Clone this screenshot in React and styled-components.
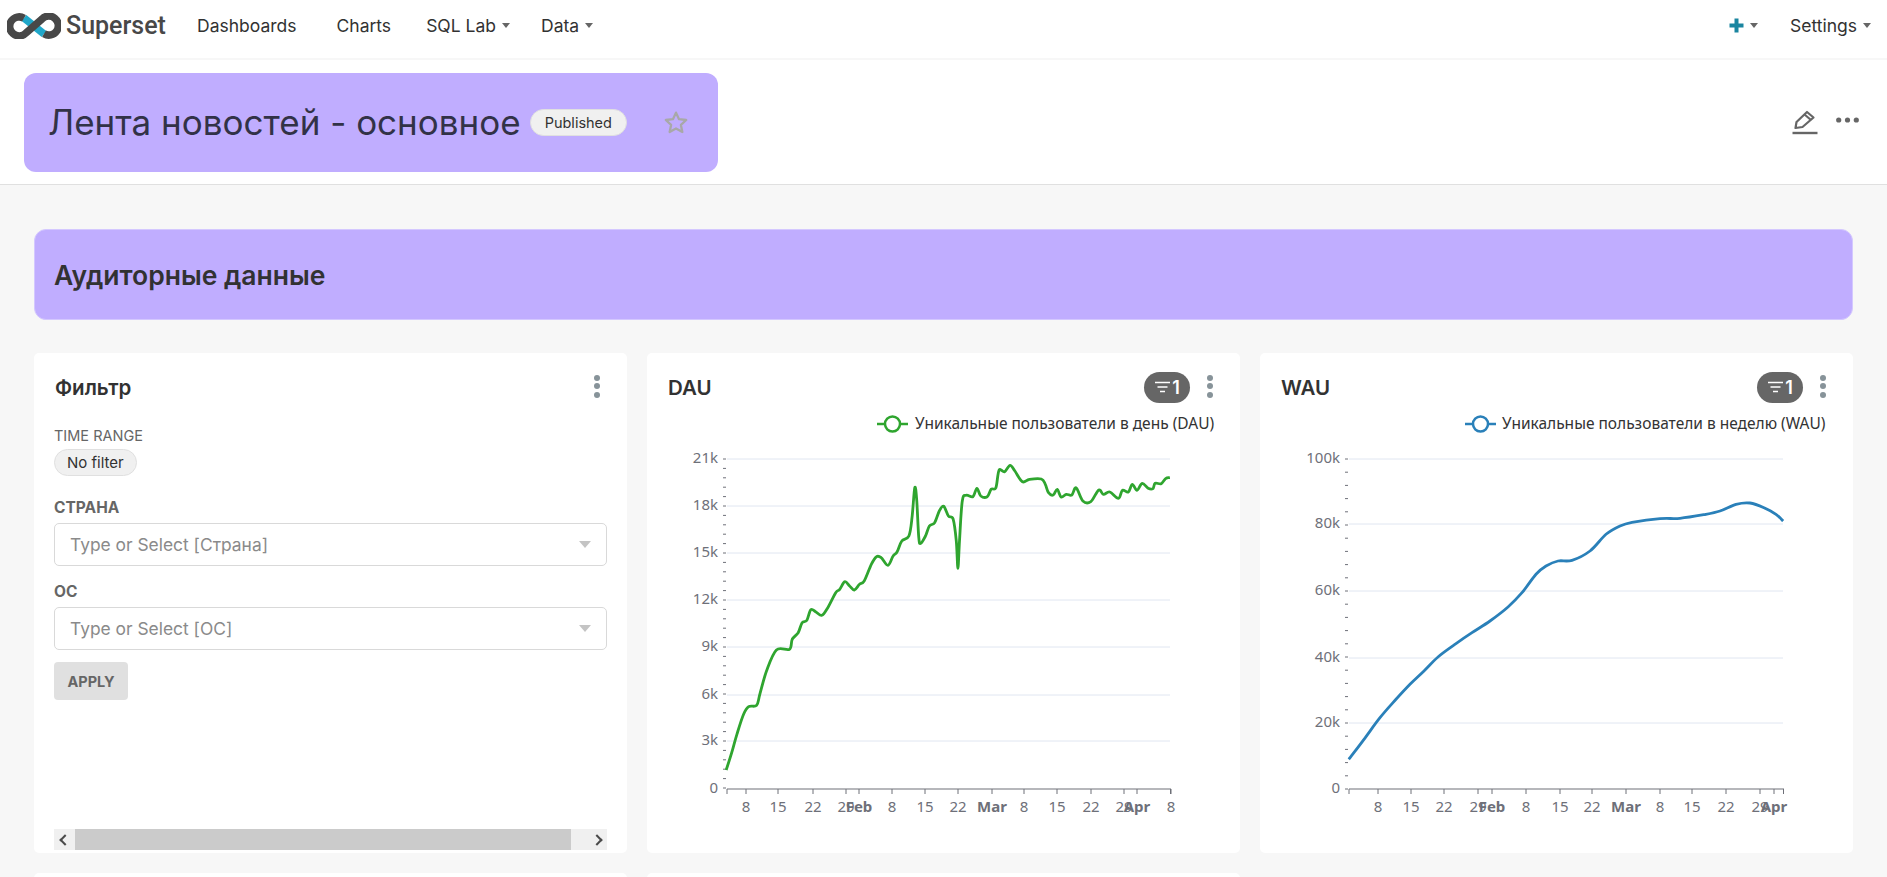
import React from "react";
import styled, { createGlobalStyle } from "styled-components";

const GlobalStyle = createGlobalStyle`
  html, body {
    margin: 0;
    height: 100%;
    overflow: hidden;
    background: #f7f7f7;
    font-family: Inter, "Noto Sans", sans-serif;
    color: #323232;
  }
`;

const Nav = styled.nav`
  height: 60px;
  box-sizing: border-box;
  background: #fff;
  border-bottom: 2px solid #f7f7f7;
  display: flex;
  align-items: center;
  padding: 0 16px 7px 7px;
`;

const Brand = styled.div`
  display: flex;
  align-items: center;
  gap: 5px;
  width: 190px;
  font-family: Roboto, sans-serif;
  font-weight: 500;
  font-size: 25px;
  color: #484848;
`;

const NavItem = styled.div`
  display: flex;
  align-items: center;
  gap: 6px;
  font-size: 17.5px;
  color: #323232;
  margin-left: ${(props) => props.$gap}px;
`;

const Caret = styled.span`
  width: 0;
  height: 0;
  border-left: 4px solid transparent;
  border-right: 4px solid transparent;
  border-top: 5px solid #666;
`;

const NavRight = styled.div`
  margin-left: auto;
  display: flex;
  align-items: center;
`;

const Header = styled.header`
  height: 125px;
  background: #fff;
  border-bottom: 1px solid #e0e0e0;
  display: flex;
  align-items: center;
  justify-content: space-between;
  padding: 0 28px 0 24px;
  box-sizing: border-box;
`;

const TitleBox = styled.div`
  width: 694px;
  height: 99px;
  box-sizing: border-box;
  background: #c0adff;
  border-radius: 12px;
  display: flex;
  align-items: center;
  padding-left: 24px;
`;

const Title = styled.h1`
  margin: 0;
  font-size: 35px;
  font-weight: 400;
  color: #323247;
  white-space: nowrap;
`;

const StatusPill = styled.span`
  margin-left: 9px;
  padding: 0 14px;
  height: 27px;
  line-height: 25px;
  box-sizing: border-box;
  border-radius: 14px;
  background: #f0f0f0;
  border: 1px solid #e0e0e0;
  font-size: 14.5px;
  color: #323232;
`;

const StarIcon = styled.svg`
  margin-left: 36px;
  width: 26px;
  height: 25px;
`;

const HeaderActions = styled.div`
  display: flex;
  align-items: flex-start;
  gap: 17px;
`;

const Content = styled.main`
  padding: 44px 34px 0;
`;

const Section = styled.div`
  height: 91px;
  box-sizing: border-box;
  background: #c0adff;
  border: 1px solid #d4c8ff;
  border-radius: 12px;
  display: flex;
  align-items: center;
  padding: 0 20px 0 19px;
  margin-bottom: 33px;
`;

const SectionTitle = styled.h2`
  margin: 0;
  font-size: 26.5px;
  font-weight: 600;
  color: #323232;
`;

const Grid = styled.div`
  display: grid;
  grid-template-columns: repeat(3, 593px);
  grid-auto-rows: 500px;
  gap: 20px;
`;

const Card = styled.section`
  background: #fff;
  border-radius: 5px;
  display: flex;
  flex-direction: column;
  box-sizing: border-box;
  padding: 18px 0 0;
`;

const CardHead = styled.div`
  height: 33px;
  margin-bottom: 2px;
  display: flex;
  align-items: center;
  padding: 0 18px 0 21px;
  flex: none;
`;

const CardTitle = styled.h3`
  margin: 0;
  font-size: 20.5px;
  font-weight: 600;
  color: #323232;
  margin-right: auto;
`;

const FilterCount = styled.div`
  width: 46px;
  height: 31px;
  border-radius: 16px;
  background: #666;
  color: #fff;
  font-size: 18px;
  font-weight: 600;
  display: flex;
  align-items: center;
  justify-content: center;
  gap: 1px;
`;

const Kebab = styled.div`
  width: 24px;
  margin-left: 8px;
  padding-bottom: 3px;
  display: flex;
  flex-direction: column;
  align-items: center;
  gap: 2.5px;
  span {
    width: 6px;
    height: 6px;
    border-radius: 50%;
    background: #879399;
  }
`;

const ChartSvg = styled.svg`
  display: block;
  width: 593px;
  height: 447px;
  flex: none;
`;

const FilterBody = styled.div`
  flex: 1;
  display: flex;
  flex-direction: column;
  padding: 16px 20px 3px;
`;

const TimeLabel = styled.div`
  font-size: 14.5px;
  line-height: 20px;
  color: #666;
  margin-top: 4px;
`;

const FilterPill = styled.div`
  align-self: flex-start;
  height: 27px;
  line-height: 25px;
  padding: 0 12px;
  box-sizing: border-box;
  border-radius: 14px;
  background: #f0f0f0;
  border: 1px solid #e0e0e0;
  font-size: 15px;
  color: #323232;
  margin-top: 3px;
`;

const FieldLabel = styled.div`
  font-size: 15.5px;
  font-weight: 700;
  line-height: 20px;
  color: #666;
  margin-top: ${(props) => props.$top}px;
`;

const SelectBox = styled.div`
  height: 43px;
  box-sizing: border-box;
  border: 1px solid #d9d9d9;
  border-radius: 5px;
  margin-top: 5px;
  padding: 0 15px;
  display: flex;
  align-items: center;
  justify-content: space-between;
  font-size: 17.4px;
  color: #8a8a8a;
`;

const SelectArrow = styled.span`
  width: 0;
  height: 0;
  border-left: 6px solid transparent;
  border-right: 6px solid transparent;
  border-top: 7px solid #c4c4c4;
`;

const ApplyButton = styled.button`
  align-self: flex-start;
  width: 74px;
  height: 38px;
  margin-top: 12px;
  border: 0;
  border-radius: 4px;
  background: #e0e0e0;
  color: #666;
  font-family: inherit;
  font-size: 14.5px;
  font-weight: 700;
`;

const Scrollbar = styled.div`
  margin-top: auto;
  height: 21px;
  background: #f0f0f0;
  display: flex;
  align-items: center;
  justify-content: space-between;
  flex: none;
`;

const ScrollButton = styled.div`
  width: 21px;
  display: flex;
  justify-content: center;
  flex: none;
  span {
    width: 6px;
    height: 6px;
    border-left: 2px solid #4a4a4a;
    border-bottom: 2px solid #4a4a4a;
    transform: ${(props) => (props.$right ? "rotate(225deg)" : "rotate(45deg)")};
  }
`;

const ScrollThumb = styled.div`
  height: 21px;
  width: 496px;
  background: #cbcbcb;
  margin-right: auto;
`;

const AxisText = styled.text`
  font-family: "Noto Sans", sans-serif;
  font-size: 15px;
  fill: #6e7079;
`;

const LegendText = styled.text`
  font-family: "Noto Sans", sans-serif;
  font-size: 15.5px;
  fill: #333;
`;

// smooth line through the points, catmull-rom turned into beziers
const smoothPath = (pts) => {
  let d = `M${pts[0][0]} ${pts[0][1]}`;
  for (let i = 0; i < pts.length - 1; i++) {
    const p0 = pts[i - 1] || pts[i];
    const p1 = pts[i];
    const p2 = pts[i + 1];
    const p3 = pts[i + 2] || p2;
    const c1x = p1[0] + (p2[0] - p0[0]) / 6;
    const c1y = p1[1] + (p2[1] - p0[1]) / 6;
    const c2x = p2[0] - (p3[0] - p1[0]) / 6;
    const c2y = p2[1] - (p3[1] - p1[1]) / 6;
    d += `C${c1x.toFixed(1)} ${c1y.toFixed(1)} ${c2x.toFixed(1)} ${c2y.toFixed(1)} ${p2[0].toFixed(1)} ${p2[1].toFixed(1)}`;
  }
  return d;
};

const SVG_TOP = 405;

const LineChart = ({ cardX, color, legend, legendX, legendIconX, left, right, yTicks, xTicks, points, minorStep }) => {
  const axisY = 788 - SVG_TOP;
  const minors = [];
  for (let y = yTicks[0].y - SVG_TOP; y < axisY; y += minorStep) minors.push(y);
  const x0 = left - cardX;
  const x1 = right - cardX;
  return (
    <ChartSvg viewBox="0 0 593 447">
      <line x1={legendIconX - cardX} x2={legendIconX - cardX + 31} y1="18" y2="18" stroke={color} strokeWidth="2.5" />
      <circle cx={legendIconX - cardX + 15.5} cy="18" r="7.5" fill="#fff" stroke={color} strokeWidth="2.5" />
      <LegendText x={legendX - cardX} y="23">{legend}</LegendText>
      {yTicks.map((t) => (
        <g key={t.label}>
          {t.label !== "0" && <line x1={x0} x2={x1} y1={t.y - SVG_TOP} y2={t.y - SVG_TOP} stroke="#e0e6f1" />}
          <AxisText x={x0 - 9} y={t.y - SVG_TOP + 4} textAnchor="end">{t.label}</AxisText>
        </g>
      ))}
      {minors.map((y) => (
        <line key={y} x1={x0 - 4} x2={x0 - 1} y1={y} y2={y} stroke="#6e7079" />
      ))}
      <line x1={x0} x2={x1 + 1} y1={axisY} y2={axisY} stroke="#6e7079" strokeWidth="1.2" />
      <line x1={x0} x2={x0} y1={axisY} y2={axisY + 5} stroke="#6e7079" />
      <line x1={x1 + 0.5} x2={x1 + 0.5} y1={axisY} y2={axisY + 5} stroke="#6e7079" />
      {xTicks.map((t) => (
        <g key={t.x}>
          <line x1={t.x - cardX} x2={t.x - cardX} y1={axisY} y2={axisY + 5} stroke="#6e7079" />
          <AxisText x={t.x - cardX} y={axisY + 23} textAnchor="middle" fontWeight={t.bold ? 700 : 400}>{t.label}</AxisText>
        </g>
      ))}
      <path
        d={smoothPath(points.map(([x, y]) => [x - cardX, y - SVG_TOP]))}
        fill="none"
        stroke={color}
        strokeWidth="2.8"
        strokeLinejoin="round"
      />
    </ChartSvg>
  );
};

// points read off the picture, [x, y] on the page
const scaleDau = (rows, top) => rows.map(([x, y]) => [640 + x / 2.529, top + y / 3]);
const dauPoints = [
  ...scaleDau([[218, 447], [232, 395], [245, 340], [262, 280], [275, 257], [295, 253], [303, 220], [320, 150], [345, 87], [378, 85], [385, 55], [400, 35]], 620),
  ...scaleDau([[410, 815], [422, 808], [432, 776], [445, 783], [460, 793], [475, 770], [495, 725], [505, 715], [518, 692], [530, 705], [542, 717], [555, 700], [567, 690], [585, 640], [598, 617], [610, 620], [627, 643], [640, 615], [650, 603], [662, 570], [680, 555], [688, 500], [695, 410], [700, 450], [705, 560], [710, 577], [722, 555], [732, 525], [745, 515], [757, 480], [768, 466], [780, 495], [792, 505], [800, 570], [804, 652], [808, 570], [815, 450], [825, 433], [842, 437], [852, 412], [862, 435], [878, 437], [888, 415], [900, 410], [908, 358], [922, 362], [936, 343], [948, 360], [967, 392], [985, 385], [1015, 384], [1025, 400], [1033, 425], [1045, 432], [1055, 415], [1065, 438], [1078, 430], [1092, 432], [1103, 410], [1120, 450], [1140, 452], [1160, 417], [1172, 430], [1188, 423], [1210, 442], [1220, 418], [1235, 423], [1245, 400], [1257, 418], [1270, 397], [1285, 412], [1297, 413], [1303, 397], [1318, 398], [1330, 382], [1340, 380]], 350),
];

const scaleWau = (rows, top) => rows.map(([x, y]) => [1260 + x / 2.5, top + y / 3]);
const wauPoints = [
  ...scaleWau([[222, 415], [260, 355], [300, 290], [340, 235], [375, 190], [410, 150], [445, 108], [490, 68], [530, 35], [575, 0]], 620),
  ...scaleWau([[620, 768], [655, 725], [690, 670], [715, 645], [745, 630], [780, 628], [825, 600], [865, 550], [900, 525], [930, 514], [1000, 503], [1050, 502], [1110, 491], [1150, 480], [1190, 460], [1225, 456], [1260, 470], [1290, 490], [1308, 510]], 350),
];

const xLabels = ["8", "15", "22", "29", "Feb", "8", "15", "22", "Mar", "8", "15", "22", "29", "Apr", "8"];
const withLabels = (xs) => xs.map((x, i) => ({ x, label: xLabels[i], bold: ["Feb", "Mar", "Apr"].includes(xLabels[i]) }));

const dauY = [
  { label: "21k", y: 458 }, { label: "18k", y: 505 }, { label: "15k", y: 552 }, { label: "12k", y: 599 },
  { label: "9k", y: 646 }, { label: "6k", y: 694 }, { label: "3k", y: 740 }, { label: "0", y: 788 },
];
const wauY = [
  { label: "100k", y: 458 }, { label: "80k", y: 523 }, { label: "60k", y: 590 },
  { label: "40k", y: 657 }, { label: "20k", y: 722 }, { label: "0", y: 788 },
];

const Logo = () => (
  <svg width="54" height="26" viewBox="0 0 54 26" fill="none">
    <path d="M17 5 L37 21" stroke="#20a7c9" strokeWidth="7.5" />
    <path
      d="M17 5.200 A9.500 9.500 0 1 0 19 20 L35 6 A9.500 9.500 0 1 1 37 20.800"
      stroke="#484848"
      strokeWidth="7.5"
    />
  </svg>
);

const PlusIcon = () => (
  <svg width="15" height="15" viewBox="0 0 15 15">
    <path d="M7.5 0.5v14M0.5 7.5h14" stroke="#1a85a0" strokeWidth="4" />
  </svg>
);

const EditIcon = () => (
  <svg width="27" height="25" viewBox="0 0 27 25" fill="none" stroke="#666" strokeWidth="2.2">
    <path d="M3.5 18 L4.5 12 L15 2 L21.5 7.5 L10.500 17 Z" strokeLinejoin="round" />
    <path d="M12.5 4.5 L19 10" />
    <path d="M0.5 23h25" strokeWidth="2.4" />
  </svg>
);

const MoreIcon = () => (
  <svg width="23" height="25" viewBox="0 0 23 25" fill="#666">
    <circle cx="2.700" cy="10" r="2.600" />
    <circle cx="11.500" cy="10" r="2.600" />
    <circle cx="20.300" cy="10" r="2.600" />
  </svg>
);

const FunnelLines = () => (
  <svg width="17" height="15" viewBox="0 0 17 15" stroke="#fff" strokeWidth="1.6">
    <path d="M1 2.500h15M3.500 7h10M6 11.500h5" />
  </svg>
);

const Dots = () => (
  <Kebab>
    <span />
    <span />
    <span />
  </Kebab>
);

const ChartCard = ({ title, children }) => (
  <Card>
    <CardHead>
      <CardTitle>{title}</CardTitle>
      <FilterCount>
        <FunnelLines />1
      </FilterCount>
      <Dots />
    </CardHead>
    {children}
  </Card>
);

export default function App() {
  return (
    <>
      <GlobalStyle />
      <Nav>
        <Brand>
          <Logo />
          Superset
        </Brand>
        <NavItem $gap={0}>Dashboards</NavItem>
        <NavItem $gap={40}>Charts</NavItem>
        <NavItem $gap={35}>SQL Lab<Caret /></NavItem>
        <NavItem $gap={31}>Data<Caret /></NavItem>
        <NavRight>
          <NavItem $gap={0}><PlusIcon /><Caret /></NavItem>
          <NavItem $gap={32}>Settings<Caret /></NavItem>
        </NavRight>
      </Nav>
      <Header>
        <TitleBox>
          <Title>Лента новостей - основное</Title>
          <StatusPill>Published</StatusPill>
          <StarIcon viewBox="0 0 24 24" fill="none" stroke="#a8a8a8" strokeWidth="2.2" strokeLinejoin="round">
            <path d="M12 2.500l2.900 6.300 6.900.8-5.100 4.700 1.400 6.800-6.100-3.400-6.100 3.400 1.400-6.800L2.200 9.600l6.900-.8z" />
          </StarIcon>
        </TitleBox>
        <HeaderActions>
          <EditIcon />
          <MoreIcon />
        </HeaderActions>
      </Header>
      <Content>
        <Section>
          <SectionTitle>Аудиторные данные</SectionTitle>
        </Section>
        <Grid>
          <Card>
            <CardHead>
              <CardTitle>Фильтр</CardTitle>
              <Dots />
            </CardHead>
            <FilterBody>
              <TimeLabel>TIME RANGE</TimeLabel>
              <FilterPill>No filter</FilterPill>
              <FieldLabel $top={22}>СТРАНА</FieldLabel>
              <SelectBox>
                Type or Select [Страна]
                <SelectArrow />
              </SelectBox>
              <FieldLabel $top={16}>ОС</FieldLabel>
              <SelectBox>
                Type or Select [ОС]
                <SelectArrow />
              </SelectBox>
              <ApplyButton>APPLY</ApplyButton>
              <Scrollbar>
                <ScrollButton><span /></ScrollButton>
                <ScrollThumb />
                <ScrollButton $right><span /></ScrollButton>
              </Scrollbar>
            </FilterBody>
          </Card>
          <ChartCard title="DAU">
            <LineChart
              cardX={647}
              color="#2fa52f"
              legend="Уникальные пользователи в день (DAU)"
              legendX={915}
              legendIconX={877}
              left={727}
              right={1170}
              minorStep={9.4}
              yTicks={dauY}
              xTicks={withLabels([746, 778, 813, 846, 859, 892, 925, 958, 992, 1024, 1057, 1091, 1124, 1137, 1171])}
              points={dauPoints}
            />
          </ChartCard>
          <ChartCard title="WAU">
            <LineChart
              cardX={1260}
              color="#2a80b9"
              legend="Уникальные пользователи в неделю (WAU)"
              legendX={1502}
              legendIconX={1465}
              left={1349}
              right={1783}
              minorStep={13.2}
              yTicks={wauY}
              xTicks={withLabels([1378, 1411, 1444, 1478, 1492, 1526, 1560, 1592, 1626, 1660, 1692, 1726, 1760, 1774])}
              points={wauPoints}
            />
          </ChartCard>
          <Card />
          <Card />
        </Grid>
      </Content>
    </>
  );
}
